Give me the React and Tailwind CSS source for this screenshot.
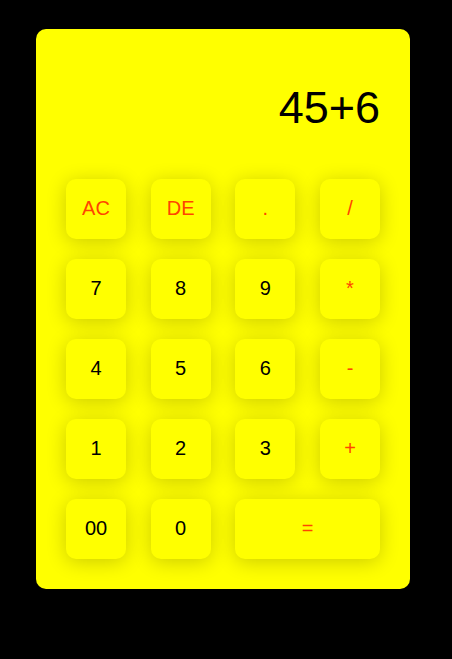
const keys = [
  { label: "AC", op: true },
  { label: "DE", op: true },
  { label: ".", op: true },
  { label: "/", op: true },
  { label: "7" },
  { label: "8" },
  { label: "9" },
  { label: "*", op: true },
  { label: "4" },
  { label: "5" },
  { label: "6" },
  { label: "-", op: true },
  { label: "1" },
  { label: "2" },
  { label: "3" },
  { label: "+", op: true },
  { label: "00" },
  { label: "0" },
  { label: "=", op: true, wide: true },
];

export default function App() {
  return (
    <div className="min-h-screen bg-black pt-[29px] pl-[36px] font-['Liberation_Sans',Arial,sans-serif]">
      <div className="w-[374px] rounded-[10px] bg-[#ffff00] p-[30px]">
        <div className="flex h-[100px] items-center justify-end pb-[2px] text-[45px] text-black">
          45+6
        </div>
        <div className="mt-[20px] grid grid-cols-[repeat(4,60px)] justify-between gap-y-[20px]">
          {keys.map((k) => (
            <button
              key={k.label}
              className={
                "flex h-[60px] items-center justify-center rounded-[10px] bg-[#ffff00] pb-[2px] text-[20px] shadow-[0_3px_20px_rgba(0,0,0,0.2)] " +
                (k.op ? "text-[#ff4500] " : "text-black ") +
                (k.wide ? "col-span-2" : "")
              }
            >
              {k.label}
            </button>
          ))}
        </div>
      </div>
    </div>
  );
}
